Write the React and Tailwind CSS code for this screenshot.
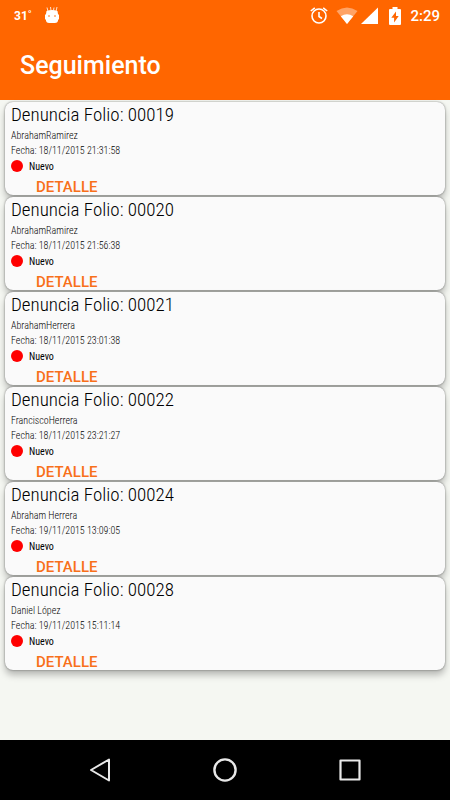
const reports = [
  { folio: "00019", name: "AbrahamRamirez", date: "18/11/2015 21:31:58" },
  { folio: "00020", name: "AbrahamRamirez", date: "18/11/2015 21:56:38" },
  { folio: "00021", name: "AbrahamHerrera", date: "18/11/2015 23:01:38" },
  { folio: "00022", name: "FranciscoHerrera", date: "18/11/2015 23:21:27" },
  { folio: "00024", name: "Abraham Herrera", date: "19/11/2015 13:09:05" },
  { folio: "00028", name: "Daniel López", date: "19/11/2015 15:11:14" },
];

function StatusBar() {
  return (
    <div className="flex h-8 items-center justify-between pr-[10px] pl-[14px] text-white">
      <div className="flex items-center gap-3">
        <span className="w-[18px] text-xs font-bold whitespace-nowrap">31˚</span>
        <svg width="16" height="18" viewBox="0 0 16 18" fill="currentColor" aria-hidden="true">
          <path d="M3 0.500l1 4M6.500 0l0.500 3.500M10 0.500l-0.500 3M13 0l-1 4.500" stroke="currentColor" strokeWidth="0.800" />
          <path d="M2.500 4Q8 2 13.500 4L14 7l1 1v4l-1 1v1q-0.500 2-3 2H5q-2.500 0-3-2v-1l-1-1V8l1-1z" />
          <circle cx="5" cy="9" r="0.800" fill="#ff6600" />
          <circle cx="11" cy="9" r="0.800" fill="#ff6600" />
        </svg>
      </div>
      <div className="flex items-center">
        <svg width="18" height="18" viewBox="0 0 18 18" fill="none" stroke="currentColor" strokeWidth="1.600" aria-hidden="true">
          <circle cx="9" cy="9" r="7" />
          <path d="M9 5v4.500l3 2M0.800 4L4.800 0.800M17.200 4L13.200 0.800" />
        </svg>
        <svg className="ml-2" width="22" height="18" viewBox="0 0 22 18" fill="currentColor" aria-hidden="true">
          <path d="M0.500 4Q11-3 21.500 4L11 17z" opacity="0.400" />
          <path d="M4.800 9.300Q11 5 17.200 9.300L11 17z" />
        </svg>
        <svg className="ml-[3px]" width="17" height="18" viewBox="0 0 17 18" fill="currentColor" aria-hidden="true">
          <path d="M0 17L17 0.500V17z" />
        </svg>
        <svg className="ml-[11px]" width="12" height="18" viewBox="0 0 12 18" fill="currentColor" aria-hidden="true">
          <path d="M3.500 0h5v2H11q1 0 1 1v14q0 1-1 1H1q-1 0-1-1V3q0-1 1-1h2.500z" />
          <path d="M7 4.500L2.300 10.800h2.800v4.700l4.600-6.500H7z" fill="#ff6600" />
        </svg>
        <span className="ml-[9px] text-[15px] font-medium">2:29</span>
      </div>
    </div>
  );
}

function ReportCard({ folio, name, date }) {
  return (
    <li className="flex h-[93px] flex-col items-start rounded-lg bg-[#fafafa] px-[6px] font-['Roboto_Condensed_Light','Roboto_Condensed',sans-serif] text-black shadow-[0_5px_7px_rgba(0,0,0,0.26),0_0_2px_rgba(0,0,0,0.5)]">
      <h2 className="text-[19px] leading-[26px]">Denuncia Folio: {folio}</h2>
      <p className="text-[10px] leading-[15px]">{name}</p>
      <p className="text-[10px] leading-[15px]">Fecha: {date}</p>
      <div className="flex h-4 items-center gap-[6px]">
        <span className="size-3 rounded-full bg-[#ff0000]" />
        <span className="font-['Roboto_Condensed',sans-serif] text-[10px]">Nuevo</span>
      </div>
      <button type="button" className="ml-[25px] h-5 pt-[5px] font-['Roboto',sans-serif] text-[15px] leading-4 font-medium text-[#f8701a]">
        DETALLE
      </button>
    </li>
  );
}

function NavigationBar() {
  return (
    <nav className="flex h-[60px] items-center justify-center gap-[99px] bg-black text-[#e8e8e8]">
      <button type="button" aria-label="Atrás">
        <svg width="26" height="26" viewBox="0 0 26 26" fill="none" stroke="currentColor" strokeWidth="2" strokeLinejoin="round">
          <path d="M4 13L22 2.500v21z" />
        </svg>
      </button>
      <button type="button" aria-label="Inicio">
        <svg width="26" height="26" viewBox="0 0 26 26" fill="none" stroke="currentColor" strokeWidth="2.400">
          <circle cx="13" cy="13" r="10.600" />
        </svg>
      </button>
      <button type="button" aria-label="Recientes">
        <svg width="26" height="26" viewBox="0 0 26 26" fill="none" stroke="currentColor" strokeWidth="2.200" strokeLinejoin="round">
          <path d="M3.500 3.500h19v19H3.500z" />
        </svg>
      </button>
    </nav>
  );
}

export default function App() {
  return (
    <div className="flex min-h-screen flex-col bg-[#f5f7f2] font-['Roboto',sans-serif]">
      <header className="bg-[#ff6600]">
        <StatusBar />
        <h1 className="h-[68px] pt-[18px] pl-5 text-[25px] leading-8 font-medium text-white">Seguimiento</h1>
      </header>
      <main className="flex-1 px-[5px] pt-[2px]">
        <ul className="flex flex-col gap-[2px]">
          {reports.map((report) => (
            <ReportCard key={report.folio} {...report} />
          ))}
        </ul>
      </main>
      <NavigationBar />
    </div>
  );
}
